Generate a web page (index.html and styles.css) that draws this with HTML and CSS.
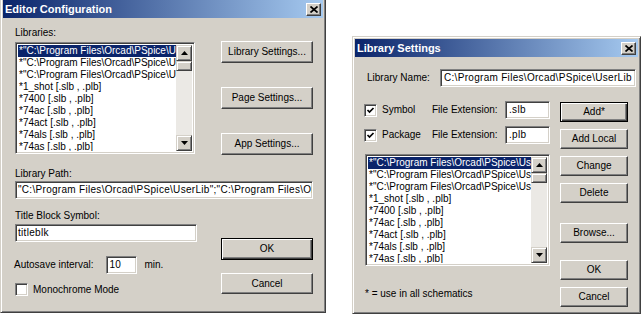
FILE: index.html
```html
<!doctype html>
<html>
<head>
   <title>Editor Configuration</title>
   <meta charset="utf-8">
   <link rel="stylesheet" href="styles.css">
</head>
<body>

   <div class="desk">

      <!-- editor configuration dialog -->
      <div class="dlg editor">
         <div class="titlebar">
            <span>Editor Configuration</span>
            <span class="close"><svg width="8" height="7" viewBox="0 0 8 7"><path d="M0.5 0.5 L7.5 6.5 M7.5 0.5 L0.5 6.5" stroke="#000" stroke-width="1.7" fill="none"/></svg></span>
         </div>
         <div class="client">
            <div class="ed-top">
               <div class="ed-libs">
                  <div class="lbl">Libraries:</div>
                  <div class="listbox">
                     <div class="items">
                        <div class="sel">*"C:\Program Files\Orcad\PSpice\UserLib"</div>
                        <div>*"C:\Program Files\Orcad\PSpice\UserLib"</div>
                        <div>*"C:\Program Files\Orcad\PSpice\UserLib"</div>
                        <div>*1_shot [.slb , .plb]</div>
                        <div>*7400 [.slb , .plb]</div>
                        <div>*74ac [.slb , .plb]</div>
                        <div>*74act [.slb , .plb]</div>
                        <div>*74als [.slb , .plb]</div>
                        <div>*74as [.slb , .plb]</div>
                     </div>
                     <div class="vscroll">
                        <div class="sb-btn"><svg width="7" height="4" viewBox="0 0 7 4"><path d="M3.5 0 L7 4 L0 4 Z"/></svg></div>
                        <div class="sb-thumb"></div>
                        <div class="sb-track"></div>
                        <div class="sb-btn"><svg width="7" height="4" viewBox="0 0 7 4"><path d="M0 0 L7 0 L3.5 4 Z"/></svg></div>
                     </div>
                  </div>
               </div>
               <div class="ed-side">
                  <div class="btn">Library Settings...</div>
                  <div class="btn">Page Settings...</div>
                  <div class="btn">App Settings...</div>
               </div>
            </div>

            <div class="lbl path-lbl">Library Path:</div>
            <div class="field path">"C:\Program Files\Orcad\PSpice\UserLib";"C:\Program Files\Orcad\PSpice\Library"</div>

            <div class="ed-bottom">
               <div class="ed-fields">
                  <div class="lbl">Title Block Symbol:</div>
                  <div class="field title-field">titleblk</div>
                  <div class="autosave">
                     <span>Autosave interval:</span>
                     <span class="field mins">10</span>
                     <span>min.</span>
                  </div>
                  <div class="check-row">
                     <span class="checkbox"></span>
                     <span>Monochrome Mode</span>
                  </div>
               </div>
               <div class="ed-side2">
                  <div class="btn default">OK</div>
                  <div class="btn">Cancel</div>
               </div>
            </div>
         </div>
      </div>

      <!-- library settings dialog -->
      <div class="dlg libset">
         <div class="titlebar">
            <span>Library Settings</span>
            <span class="close"><svg width="8" height="7" viewBox="0 0 8 7"><path d="M0.5 0.5 L7.5 6.5 M7.5 0.5 L0.5 6.5" stroke="#000" stroke-width="1.7" fill="none"/></svg></span>
         </div>
         <div class="client">
            <div class="name-row">
               <span class="name-lbl">Library Name:</span>
               <span class="field name-field">C:\Program Files\Orcad\PSpice\UserLib</span>
            </div>

            <div class="ls-main">
               <div class="ls-left">
                  <div class="ext-row">
                     <span class="check-wrap"><span class="checkbox on"><svg width="9" height="9" viewBox="0 0 9 9"><path d="M1.5 4 L3.5 6 L7.5 2" stroke="#000" stroke-width="1.7" fill="none"/></svg></span>Symbol</span>
                     <span class="ext-lbl">File Extension:</span>
                     <span class="field ext">.slb</span>
                  </div>
                  <div class="ext-row">
                     <span class="check-wrap"><span class="checkbox on"><svg width="9" height="9" viewBox="0 0 9 9"><path d="M1.5 4 L3.5 6 L7.5 2" stroke="#000" stroke-width="1.7" fill="none"/></svg></span>Package</span>
                     <span class="ext-lbl">File Extension:</span>
                     <span class="field ext">.plb</span>
                  </div>
                  <div class="listbox ls-list">
                     <div class="items">
                        <div class="sel">*"C:\Program Files\Orcad\PSpice\UserLib"</div>
                        <div>*"C:\Program Files\Orcad\PSpice\UserLib"</div>
                        <div>*"C:\Program Files\Orcad\PSpice\UserLib"</div>
                        <div>*1_shot [.slb , .plb]</div>
                        <div>*7400 [.slb , .plb]</div>
                        <div>*74ac [.slb , .plb]</div>
                        <div>*74act [.slb , .plb]</div>
                        <div>*74als [.slb , .plb]</div>
                        <div>*74as [.slb , .plb]</div>
                     </div>
                     <div class="vscroll">
                        <div class="sb-btn"><svg width="7" height="4" viewBox="0 0 7 4"><path d="M3.5 0 L7 4 L0 4 Z"/></svg></div>
                        <div class="sb-thumb"></div>
                        <div class="sb-track"></div>
                        <div class="sb-btn"><svg width="7" height="4" viewBox="0 0 7 4"><path d="M0 0 L7 0 L3.5 4 Z"/></svg></div>
                     </div>
                  </div>
                  <div class="note">* = use in all schematics</div>
               </div>
               <div class="ls-right">
                  <div class="btn default">Add*</div>
                  <div class="btn">Add Local</div>
                  <div class="btn">Change</div>
                  <div class="btn">Delete</div>
                  <div class="btn browse">Browse...</div>
                  <div class="btn ok">OK</div>
                  <div class="btn">Cancel</div>
               </div>
            </div>
         </div>
      </div>

   </div>

</body>
</html>
```

FILE: styles.css
```css
body{
   margin: 0;
   background: #fff;
   font-family: "Liberation Sans", Arial, sans-serif;
   font-size: 10px;
   line-height: 12px;
   color: #000;
}

.desk{
   display: flex;
   align-items: flex-start;
}

/* win2k style window frame */
.dlg{
   box-sizing: border-box;
   background: #d4d0c8;
   border: 1px solid;
   border-color: #d4d0c8 #404040 #404040 #d4d0c8;
   box-shadow: inset 1px 1px #fff, inset -1px -1px #808080;
   padding: 2px;
}

.editor{
   width: 326px;
   height: 316px;
   margin-top: -3px;
}

.libset{
   width: 289px;
   height: 278px;
   margin: 36px 0 0 26px;
}

.titlebar{
   height: 18px;
   display: flex;
   align-items: center;
   justify-content: space-between;
   padding: 0 2px 0 2px;
   background: linear-gradient(to right, #0a246a, #a6caf0);
   color: #fff;
   font-size: 11px;
   font-weight: bold;
}

.close{
   box-sizing: border-box;
   width: 15px;
   height: 13px;
   display: flex;
   align-items: center;
   justify-content: center;
   background: #d4d0c8;
   border: 1px solid;
   border-color: #fff #404040 #404040 #fff;
   box-shadow: inset -1px -1px #808080;
}

.lbl{
   height: 12px;
}

/* raised push button */
.btn{
   box-sizing: border-box;
   display: flex;
   align-items: center;
   justify-content: center;
   height: 22px;
   background: #d4d0c8;
   border: 1px solid;
   border-color: #fff #404040 #404040 #fff;
   box-shadow: inset -1px -1px #808080, inset 1px 1px #d4d0c8;
}

.btn.default{
   border-color: #000;
   box-shadow: inset 1px 1px #fff, inset -1px -1px #404040, inset -2px -2px #808080;
}

/* sunken edit field */
.field{
   box-sizing: border-box;
   display: flex;
   align-items: center;
   height: 18px;
   padding: 0 3px;
   background: #fff;
   border: 1px solid;
   border-color: #808080 #fff #fff #808080;
   box-shadow: inset 1px 1px #404040, inset -1px -1px #d4d0c8;
   white-space: nowrap;
   overflow: hidden;
   letter-spacing: 0.3px;
}

.listbox{
   box-sizing: border-box;
   display: flex;
   height: 112px;
   padding: 2px;
   background: #fff;
   border: 1px solid;
   border-color: #808080 #fff #fff #808080;
   box-shadow: inset 1px 1px #404040, inset -1px -1px #d4d0c8;
}

.items{
   flex: 1;
   overflow: hidden;
}

.items div{
   height: 12px;
   padding-left: 1px;
   white-space: nowrap;
}

.items .sel{
   background: #0a246a;
   color: #fff;
}

.vscroll{
   width: 16px;
   display: flex;
   flex-direction: column;
   background: #ebe9e5;
}

.sb-btn, .sb-thumb{
   box-sizing: border-box;
   background: #d4d0c8;
   border: 1px solid;
   border-color: #d4d0c8 #404040 #404040 #d4d0c8;
   box-shadow: inset 1px 1px #fff, inset -1px -1px #808080;
}

.sb-btn{
   height: 16px;
   display: flex;
   align-items: center;
   justify-content: center;
}

.sb-thumb{
   height: 10px;
}

.sb-track{
   flex: 1;
}

.checkbox{
   box-sizing: border-box;
   width: 13px;
   height: 13px;
   display: inline-flex;
   align-items: center;
   justify-content: center;
   flex: none;
   background: #fff;
   border: 1px solid;
   border-color: #808080 #fff #fff #808080;
   box-shadow: inset 1px 1px #404040, inset -1px -1px #d4d0c8;
}

/* editor configuration */
.editor .client{
   padding: 9px 10px 0 12px;
}

.ed-top{
   display: flex;
   gap: 26px;
}

.ed-libs{
   width: 180px;
}

.ed-libs .lbl{
   margin-bottom: 3px;
}

.ed-side{
   width: 92px;
   padding-top: 14px;
   display: flex;
   flex-direction: column;
   gap: 24px;
}

.path-lbl{
   margin-top: 13px;
}

.path{
   margin-top: 1px;
   padding-left: 2px;
}

.ed-bottom{
   display: flex;
   gap: 24px;
   margin-top: 11px;
}

.ed-fields{
   width: 182px;
}

.title-field{
   margin-top: 2px;
   padding-left: 2px;
}

.autosave{
   display: flex;
   align-items: center;
   margin-top: 14px;
   margin-left: -1px;
}

.mins{
   width: 31px;
   margin: 0 8px 0 12px;
}

.check-row{
   display: flex;
   align-items: center;
   gap: 5px;
   margin-top: 9px;
}

.ed-side2{
   width: 92px;
   padding-top: 28px;
   display: flex;
   flex-direction: column;
   gap: 13px;
}

.ed-side2 .btn + .btn{
   height: 21px;
}

/* library settings */
.libset .client{
   padding: 12px 10px 0 9px;
}

.name-row{
   display: flex;
   align-items: center;
   margin-right: -8px;
}

.name-lbl{
   width: 73px;
   padding-left: 3px;
}

.name-field{
   flex: 1;
}

.ls-main{
   display: flex;
   gap: 10px;
   margin-top: 14px;
}

.ls-left{
   width: 186px;
}

.ext-row{
   display: flex;
   align-items: center;
   height: 18px;
}

.ext-row + .ext-row{
   margin-top: 7px;
}

.check-wrap{
   width: 68px;
   display: flex;
   align-items: center;
   gap: 5px;
}

.ext-lbl{
   width: 73px;
}

.ext{
   width: 45px;
}

.ls-list{
   margin: 10px 0 0 1px;
}

.note{
   margin: 22px 0 0 1px;
}

.ls-right{
   width: 68px;
   padding-top: 1px;
   display: flex;
   flex-direction: column;
   gap: 7px;
}

.ls-right .btn{
   height: 20px;
}

.ls-right .browse{
   margin-top: 13px;
}

.ls-right .ok{
   margin-top: 10px;
}
```
